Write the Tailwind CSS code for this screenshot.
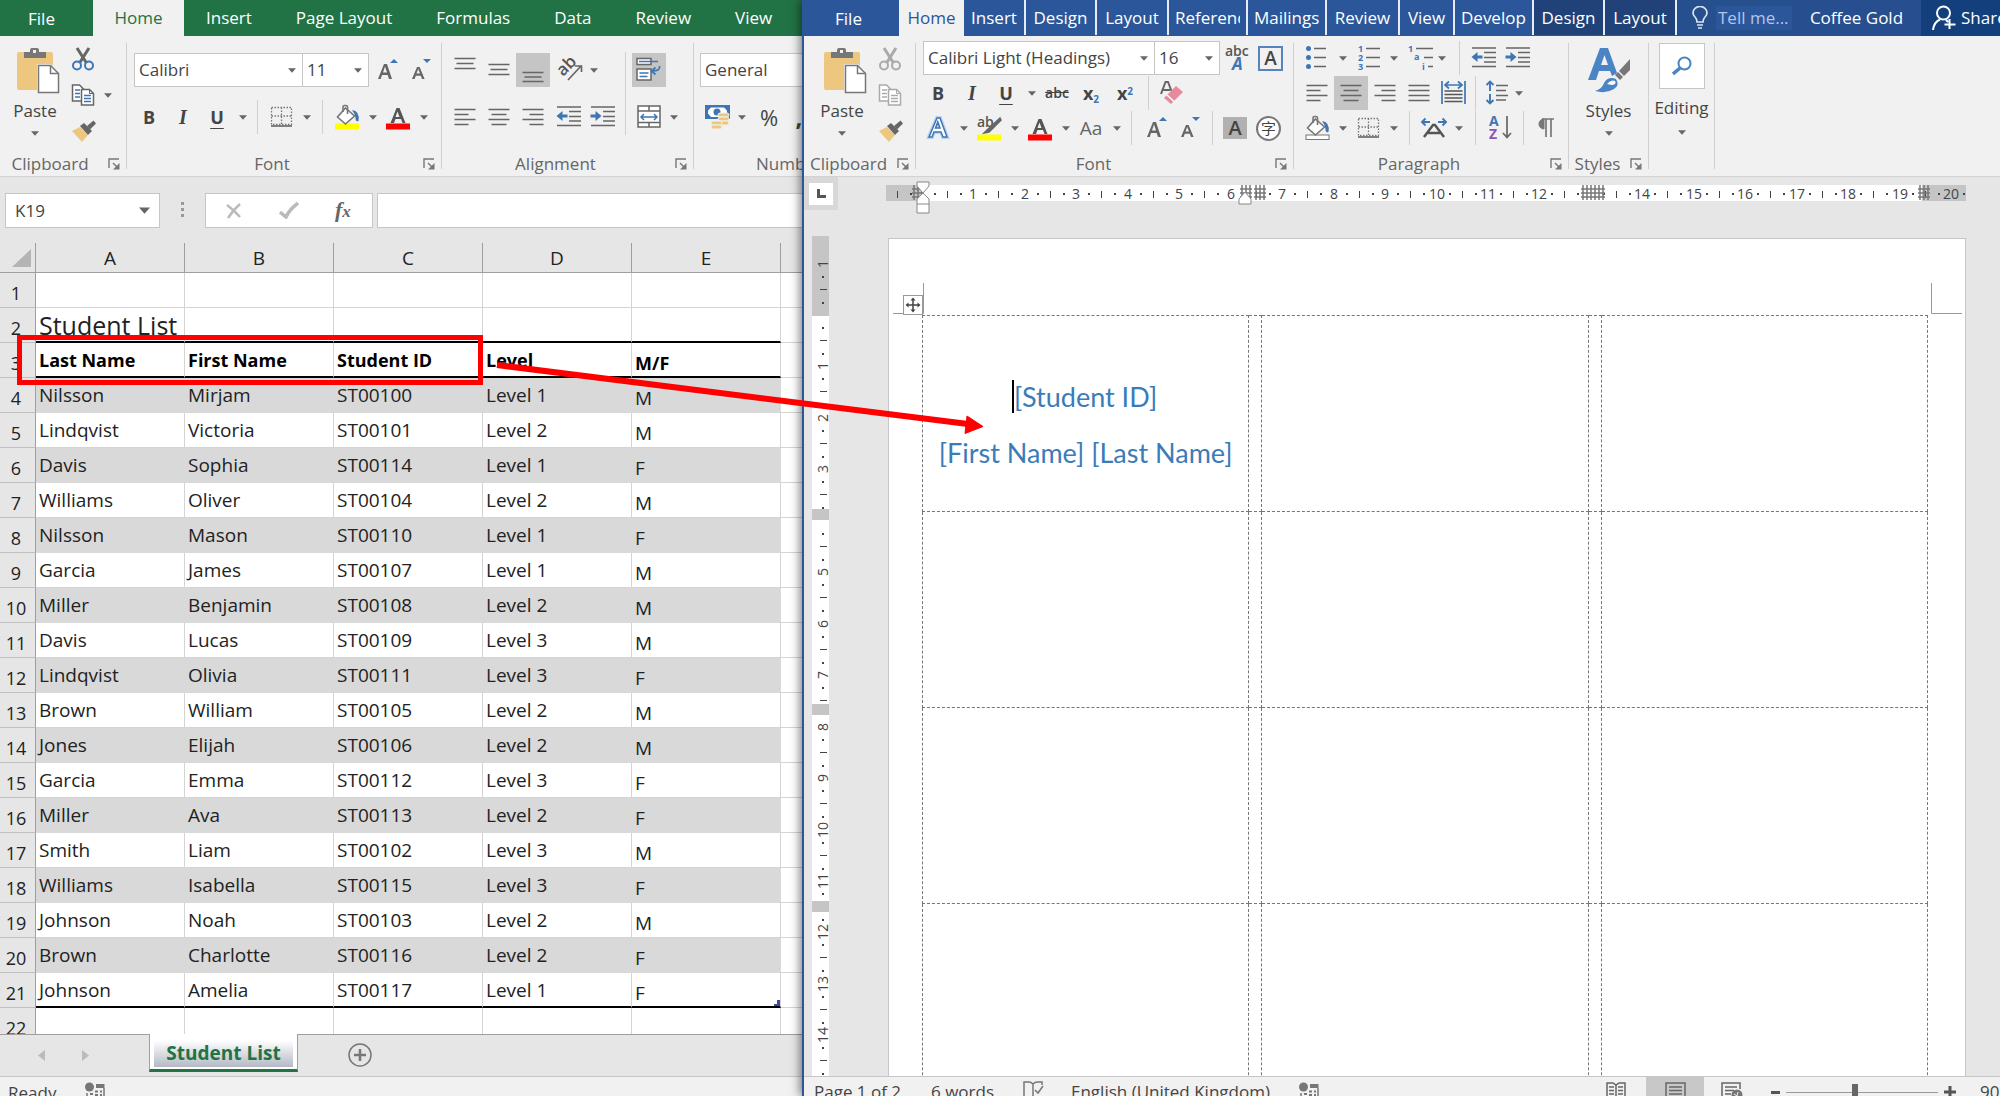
<!DOCTYPE html>
<html lang="en">
<head>
    <meta charset="UTF-8">
    <meta name="viewport" content="width=device-width, initial-scale=1.0">
    <title>Student List - Labels</title>
    <script src="https://cdn.jsdelivr.net/npm/@tailwindcss/browser@4"></script>
</head>
<body class="relative h-screen overflow-hidden bg-[#e6e6e6] font-['Open_Sans',sans-serif] text-[17px] leading-6 text-[#444]">

    <!-- Icon set -->
    <svg class="hidden">
        <symbol id="caret" viewBox="0 0 8 5"><path d="M0 0.3h8L4 4.8z" fill="#666"/></symbol>
        <symbol id="launcher" viewBox="0 0 12 12"><path d="M1 10V1h10" fill="none" stroke="#777" stroke-width="1.4"/><path d="M5 5l4 4" stroke="#777" stroke-width="1.4"/><path d="M11.5 5v6.500h-6.500z" fill="#777"/></symbol>
        <symbol id="paste" viewBox="0 0 44 48">
            <rect x="1" y="5" width="36" height="38" rx="2" fill="#edc77f"/>
            <path d="M8 11V5h6V3q0-2 2-2h5q2 0 2 2v2h7v6z" fill="#777"/><rect x="17" y="3" width="3" height="3" fill="#f1f1f1"/>
            <path d="M21 17h14l9 9v21H21z" fill="#f1f1f1"/>
            <path d="M22.500 18.500h12l8 8v19h-20z" fill="#fff" stroke="#777" stroke-width="1.5"/><path d="M34.500 18.500v8h8" fill="none" stroke="#777" stroke-width="1.5"/>
        </symbol>
        <symbol id="cut" viewBox="0 0 24 24"><path d="M6 1l9.500 15M18 1L8.500 16" fill="none" stroke="currentColor" stroke-width="3"/><g fill="none" stroke="var(--ring)" stroke-width="2"><circle cx="6" cy="18.500" r="4"/><circle cx="18" cy="18.500" r="4"/></g></symbol>
        <symbol id="copy" viewBox="0 0 24 24">
            <path d="M1.500 2h7l4 4v12h-11z" fill="#fff" stroke="currentColor" stroke-width="1.500"/><path d="M4 7h5M4 10.500h5M4 14h5" stroke="var(--ring)" stroke-width="1.500"/>
            <path d="M10.500 6.500h8l4 4v11.500h-12z" fill="#fff" stroke="currentColor" stroke-width="1.500"/><path d="M18.500 6.500v4h4" fill="none" stroke="currentColor"/><path d="M13 12.500h7M13 15.500h7M13 18.500h7" stroke="var(--ring)" stroke-width="1.500"/>
        </symbol>
        <symbol id="brush" viewBox="0 0 26 24"><path d="M1 12l8-4 8 8-6 7z" fill="#edc77f"/><path d="M9 7l4-3 8 8-4 4z" fill="#666"/><path d="M16 7l6.500-5.500 2.500 3-6 6z" fill="#666"/></symbol>
        <symbol id="borders" viewBox="0 0 34 34"><path d="M7.500 7.500h20v17h-20zM17.500 7.500v17M7.500 16h20" fill="none" stroke="#777" stroke-width="1.300" stroke-dasharray="1.500 1.500"/><path d="M7 26h21" stroke="#666" stroke-width="1.600"/></symbol>
        <symbol id="bucket" viewBox="0 0 34 34"><path d="M15.500 8l9 8-9 8-8-7z" fill="#fff" stroke="#777" stroke-width="1.600"/><path d="M13 12V7q0-1.500 1.500-1.500h1.500q1.500 0 1.500 1.500v7" fill="none" stroke="#777" stroke-width="1.600"/><path d="M22 10q8 1 6.500 11-3 1-3-3l-1-4z" fill="#3e76b5"/></symbol>
        <symbol id="fontcolor" viewBox="0 0 34 34"><path d="M9.500 23l6-15h3l6 15h-3l-1.500-4h-5.500l-1.500 4zM14.500 17h4l-2-5.500z" fill="#555"/><rect x="5" y="23.500" width="24" height="6" fill="#f00"/></symbol>
        <symbol id="grow" viewBox="0 0 34 34"><path d="M7 26l6-15h3l5 15h-3l-1.300-4h-5.700l-1.300 4zM12 19.500h4l-2-6z" fill="#666"/><path d="M19 10l4-4 4 4z" fill="#3e76b5"/></symbol>
        <symbol id="shrink" viewBox="0 0 34 34"><path d="M7 26l5-12h2.600l5 12h-2.600l-1.200-3.300h-5l-1.200 3.300zM11.500 20.500h3.500l-1.800-4.500z" fill="#666"/><path d="M18 6h8l-4 4z" fill="#3e76b5"/></symbol>
        <symbol id="al-top" viewBox="0 0 34 34"><path d="M6.500 5.500h21M8.500 10.500h17M6.500 15.500h21" stroke="#666" stroke-width="1.500"/></symbol>
        <symbol id="al-mid" viewBox="0 0 34 34"><path d="M6.500 11.500h21M8.500 16.500h17M6.500 21.500h21" stroke="#666" stroke-width="1.500"/></symbol>
        <symbol id="al-bot" viewBox="0 0 34 34"><path d="M6.500 19.500h21M8.500 24h17M6.500 28.500h21" stroke="#666" stroke-width="1.500"/></symbol>
        <symbol id="al-left" viewBox="0 0 34 34"><path d="M6.500 9.500h21M6.500 14.500h14M6.500 19.500h21M6.500 24.500h14" stroke="#666" stroke-width="1.500"/></symbol>
        <symbol id="al-center" viewBox="0 0 34 34"><path d="M6.500 9.500h21M9.500 14.500h15M6.500 19.500h21M9.500 24.500h15" stroke="#666" stroke-width="1.500"/></symbol>
        <symbol id="al-right" viewBox="0 0 34 34"><path d="M6.500 9.500h21M13.500 14.500h14M6.500 19.500h21M13.500 24.500h14" stroke="#666" stroke-width="1.500"/></symbol>
        <symbol id="al-just" viewBox="0 0 34 34"><path d="M6.500 9.500h21M6.500 14.500h21M6.500 19.500h21M6.500 24.500h21" stroke="#666" stroke-width="1.500"/></symbol>
        <symbol id="outdent" viewBox="0 0 34 34"><path d="M5 7h24M17 11.500h12M17 16.500h12M17 21h12M5 25.500h24" stroke="#666" stroke-width="1.500"/><path d="M4.500 16l6-5v3.500h5v3h-5v3.500z" fill="#3e76b5"/></symbol>
        <symbol id="indent" viewBox="0 0 34 34"><path d="M5 7h24M17 11.500h12M17 16.500h12M17 21h12M5 25.500h24" stroke="#666" stroke-width="1.500"/><path d="M15.500 16l-6-5v3.500h-5v3h5v3.500z" fill="#3e76b5"/></symbol>
        <symbol id="wrap" viewBox="0 0 34 34"><g fill="#fff" stroke="#666" stroke-width="1.500"><rect x="5" y="5.500" width="14" height="6"/><rect x="5" y="16" width="14" height="11"/></g><path d="M7 8.500h19M7.500 20h9M7.500 23.500h8M27.500 13q1 5-7 5M23.500 14.500l-4 3.500 4 3.500" fill="none" stroke="#3e76b5" stroke-width="1.700"/></symbol>
        <symbol id="merge" viewBox="0 0 34 34"><path d="M6 6h22v21H6zM6 11h22M6 22.500h22M17 6v5M17 22.500V27" fill="#fff" stroke="#666" stroke-width="1.500"/><path d="M9 17h16M12 14l-3 3 3 3M22 14l3 3-3 3" fill="none" stroke="#3e76b5" stroke-width="1.500"/></symbol>
        <symbol id="money" viewBox="0 0 34 34"><path d="M5 5h25v14H5z" fill="#3e76b5"/><path d="M11 7.500h13l3 3v3l-3 3.500H11l-3-3.500v-3z" fill="#fff"/><circle cx="17" cy="12" r="3.500" fill="#3e76b5"/><g fill="#edc77f" stroke="#f1f1f1"><rect x="18" y="13" width="11" height="4" rx="2"/><rect x="18" y="17" width="11" height="4" rx="2"/><rect x="18" y="21" width="11" height="4" rx="2"/><rect x="11" y="21" width="11" height="4" rx="2"/><rect x="11" y="25" width="11" height="4" rx="2"/></g></symbol>
        <symbol id="eraser" viewBox="0 0 34 34"><path d="M6 18L10.500 6h2.500l3.500 9M8 14h7" fill="none" stroke="#666" stroke-width="2"/><path d="M9 22L21 10l7 6-12 12z" fill="#e88a9e"/><path d="M12 19l7 6.500" stroke="#fff" stroke-width="1.500"/></symbol>
        <symbol id="bullets" viewBox="0 0 34 34"><g fill="#3e76b5"><circle cx="8.500" cy="7.500" r="2.500"/><circle cx="8.500" cy="16.500" r="2.500"/><circle cx="8.500" cy="25.500" r="2.500"/></g><path d="M14 7.500h12M14 16.500h12M14 25.500h12" stroke="#666" stroke-width="1.500"/></symbol>
        <symbol id="distribute" viewBox="0 0 34 34"><path d="M6 5v23M29 5v23M9.500 9h16M13 5.500L9 9l4 3.500M22 5.500L26 9l-4 3.500" fill="none" stroke="#3e76b5" stroke-width="1.700"/><path d="M8.500 15h18M8.500 18.500h18M8.500 22h18M8.500 25.500h18" stroke="#555" stroke-width="1.500"/></symbol>
        <symbol id="spacing" viewBox="0 0 34 34"><path d="M9 6v9M5.500 9L9 5.500l3.500 3.500M9 18v9M5.500 24L9 27.500l3.500-3.500" fill="none" stroke="#3e76b5" stroke-width="1.900"/><path d="M15 9.500h12M15 14.500h10M15 19.500h12M15 24h10" stroke="#666" stroke-width="1.500"/></symbol>
        <symbol id="move" viewBox="0 0 20 20"><rect x="0.500" y="0.500" width="19" height="19" fill="#fff" stroke="#999"/><path d="M10 4v12M4 10h12" stroke="#444" stroke-width="1.500"/><path d="M10 2.500l2.500 3h-5zM10 17.500l2.500-3h-5zM2.500 10l3-2.500v5zM17.500 10l-3-2.500v5z" fill="#444"/></symbol>
        <symbol id="macro" viewBox="0 0 20 20"><circle cx="4.500" cy="5" r="4.500" fill="#777"/><path d="M11 2h8.500v4H11z" fill="#777"/><path d="M2 11v8h17V6" fill="none" stroke="#777" stroke-width="1.500"/><path d="M5 12h3M10 9.500h3M15 9.500h2M10 13h3M15 13h2M5 16h3M10 16h3M15 16h2" stroke="#777" stroke-width="1.800"/></symbol>
    </svg>

    <main class="grid h-full grid-cols-[802fr_1198fr]">

        <!-- Spreadsheet window -->
        <section class="flex min-w-0 flex-col overflow-hidden">
            <nav class="flex h-9 shrink-0 items-center bg-[#217346] whitespace-nowrap text-white">
                <button class="h-9 w-[93px] pr-[10px] pt-[2px]">File</button>
                <button class="h-9 w-[91px] bg-[#f1f1f1] text-[#217346]">Home</button>
                <div class="flex gap-11 pl-[22px]">
                    <button>Insert</button><button>Page Layout</button><button>Formulas</button><button>Data</button><button>Review</button><button>View</button>
                </div>
            </nav>

            <div class="flex h-[141px] shrink-0 border-b border-[#d2d2d2] bg-[#f1f1f1]">
                <div class="flex w-[126px] shrink-0 flex-col">
                    <div class="flex flex-1 pt-[11px]">
                        <button class="ml-2 flex w-[54px] flex-col items-center"><svg class="h-12 w-11 shrink-0 translate-x-[3px]"><use href="#paste"/></svg><span class="mt-1">Paste</span><svg class="mt-2 h-[5px] w-2"><use href="#caret"/></svg></button>
                        <div class="ml-[9px] flex flex-col gap-3 text-[#666] [--ring:#3e76b5]">
                            <button aria-label="Cut"><svg class="h-6 w-6"><use href="#cut"/></svg></button>
                            <button aria-label="Copy" class="flex items-center gap-[9px]"><svg class="h-6 w-6"><use href="#copy"/></svg><svg class="h-[5px] w-2"><use href="#caret"/></svg></button>
                            <button aria-label="Format Painter"><svg class="h-6 w-[26px]"><use href="#brush"/></svg></button>
                        </div>
                    </div>
                    <div class="flex h-6 items-center text-[#666]"><span class="flex-1 pr-2 text-center">Clipboard</span><button aria-label="Clipboard settings" class="mr-[6px]"><svg class="h-3 w-3"><use href="#launcher"/></svg></button></div>
                </div>
                <div class="my-[7px] w-px shrink-0 bg-[#d0d0d0]"></div>

                <div class="flex w-[314px] shrink-0 flex-col">
                    <div class="flex flex-1 flex-col gap-[13px] pt-[17px] pl-[5px]">
                        <div class="flex h-[34px]">
                            <label class="relative ml-[2px]"><select aria-label="Font" class="h-[34px] w-[169px] appearance-none border border-[#c6c6c6] bg-white pl-1"><option>Calibri</option></select><svg class="absolute top-[15px] right-[7px] h-[5px] w-2"><use href="#caret"/></svg></label>
                            <label class="relative"><select aria-label="Font size" class="h-[34px] w-[66px] appearance-none border border-l-0 border-[#c6c6c6] bg-white pl-1"><option>11</option></select><svg class="absolute top-[15px] right-[7px] h-[5px] w-2"><use href="#caret"/></svg></label>
                            <button aria-label="Increase font size" class="ml-[2px]"><svg class="size-[34px]"><use href="#grow"/></svg></button>
                            <button aria-label="Decrease font size"><svg class="size-[34px]"><use href="#shrink"/></svg></button>
                        </div>
                        <div class="flex h-[34px] items-center text-[18px] font-bold">
                            <button class="w-[34px]">B</button>
                            <button class="w-[34px] font-['Liberation_Serif',serif] text-[20px] italic">I</button>
                            <button class="w-[34px] underline underline-offset-4">U</button>
                            <button aria-label="Underline style" class="flex w-[17px] justify-center"><svg class="h-[5px] w-2"><use href="#caret"/></svg></button>
                            <div class="mx-[6px] h-[34px] w-px bg-[#d0d0d0]"></div>
                            <button aria-label="Borders"><svg class="size-[34px]"><use href="#borders"/></svg></button>
                            <button aria-label="Border style" class="flex w-[17px] justify-center"><svg class="h-[5px] w-2"><use href="#caret"/></svg></button>
                            <div class="mx-[7px] h-[34px] w-px bg-[#d0d0d0]"></div>
                            <button aria-label="Fill colour"><svg class="size-[34px]" viewBox="0 0 34 34"><rect x="5" y="23.500" width="24" height="6" fill="#ff0"/><use href="#bucket" width="34" height="34"/></svg></button>
                            <button aria-label="Fill colours" class="flex w-[17px] justify-center"><svg class="h-[5px] w-2"><use href="#caret"/></svg></button>
                            <button aria-label="Font colour"><svg class="size-[34px]"><use href="#fontcolor"/></svg></button>
                            <button aria-label="Font colours" class="flex w-[17px] justify-center"><svg class="h-[5px] w-2"><use href="#caret"/></svg></button>
                        </div>
                    </div>
                    <div class="flex h-6 items-center text-[#666]"><span class="flex-1 pr-[6px] text-center">Font</span><button aria-label="Font settings" class="mr-[6px]"><svg class="h-3 w-3"><use href="#launcher"/></svg></button></div>
                </div>
                <div class="my-[7px] w-px shrink-0 bg-[#d0d0d0]"></div>

                <div class="flex w-[251px] shrink-0 flex-col">
                    <div class="flex flex-1 pl-[6px]">
                        <div class="flex flex-col gap-[13px] pt-[17px]">
                            <div class="flex h-[34px] items-center">
                                <button aria-label="Top align"><svg class="size-[34px]"><use href="#al-top"/></svg></button>
                                <button aria-label="Middle align"><svg class="size-[34px]"><use href="#al-mid"/></svg></button>
                                <button aria-label="Bottom align" class="bg-[#c5c5c5]"><svg class="size-[34px]"><use href="#al-bot"/></svg></button>
                                <button aria-label="Orientation" class="ml-1"><svg class="size-[34px]" viewBox="0 0 34 34"><text x="9" y="24" transform="rotate(-45 9 24)" font-size="17" font-weight="600" fill="#555">ab</text><path d="M14 27l13-14M21 13h6.500v6" fill="none" stroke="#666" stroke-width="1.700"/></svg></button>
                                <svg class="ml-[2px] h-[5px] w-2"><use href="#caret"/></svg>
                            </div>
                            <div class="flex h-[34px] items-center">
                                <button aria-label="Align left"><svg class="size-[34px]"><use href="#al-left"/></svg></button>
                                <button aria-label="Centre"><svg class="size-[34px]"><use href="#al-center"/></svg></button>
                                <button aria-label="Align right"><svg class="size-[34px]"><use href="#al-right"/></svg></button>
                                <button aria-label="Decrease indent" class="ml-[2px]"><svg class="size-[34px]"><use href="#outdent"/></svg></button>
                                <button aria-label="Increase indent"><svg class="size-[34px]"><use href="#indent"/></svg></button>
                            </div>
                        </div>
                        <div class="mr-[6px] ml-[5px] mt-4 h-[83px] w-px bg-[#d0d0d0]"></div>
                        <div class="flex flex-col gap-[13px] pt-[17px]">
                            <button aria-label="Wrap text" class="w-[34px] bg-[#c5c5c5]"><svg class="size-[34px]"><use href="#wrap"/></svg></button>
                            <button aria-label="Merge and centre" class="flex items-center gap-1"><svg class="size-[34px]"><use href="#merge"/></svg><svg class="h-[5px] w-2"><use href="#caret"/></svg></button>
                        </div>
                    </div>
                    <div class="flex h-6 items-center text-[#666]"><span class="flex-1 pr-[6px] text-center">Alignment</span><button aria-label="Alignment settings" class="mr-[6px]"><svg class="h-3 w-3"><use href="#launcher"/></svg></button></div>
                </div>
                <div class="my-[7px] w-px shrink-0 bg-[#d0d0d0]"></div>

                <div class="flex w-[200px] shrink-0 flex-col">
                    <div class="flex flex-1 flex-col gap-[13px] pt-[17px] pl-[6px]">
                        <select aria-label="Number format" class="h-[34px] w-[180px] appearance-none border border-[#c6c6c6] bg-white pl-1"><option>General</option></select>
                        <div class="flex h-[34px] items-center">
                            <button aria-label="Accounting format"><svg class="size-[34px]"><use href="#money"/></svg></button>
                            <svg class="ml-1 h-[5px] w-2"><use href="#caret"/></svg>
                            <button class="ml-[6px] w-[34px] text-[22px]">%</button>
                            <button class="w-[26px] text-[24px] font-bold">,</button>
                        </div>
                    </div>
                    <div class="h-6 pl-[62px] text-[#666]">Number</div>
                </div>
            </div>

            <!-- Formula bar -->
            <div class="flex h-[66px] shrink-0 items-start pt-4 pl-[5px]">
                <label class="relative"><input aria-label="Name box" value="K19" class="h-[35px] w-[155px] border border-[#c6c6c6] bg-white pl-[9px]"><svg class="absolute top-[14px] right-[10px] h-[7px] w-[11px]"><use href="#caret"/></svg></label>
                <svg class="mx-[18px] h-[35px] w-[9px]" fill="#999"><rect x="3" y="9" width="3" height="3"/><rect x="3" y="15" width="3" height="3"/><rect x="3" y="21" width="3" height="3"/></svg>
                <div class="flex h-[35px] w-[168px] items-center border border-[#c6c6c6] bg-white">
                    <button aria-label="Cancel" class="ml-5"><svg class="h-4 w-4" viewBox="0 0 16 16"><path d="M1 2q7 5 13 12M14 1Q7 7 2 15" fill="none" stroke="#bbb" stroke-width="2.500"/></svg></button>
                    <button aria-label="Enter" class="ml-[37px]"><svg class="h-[17px] w-5" viewBox="0 0 20 17"><path d="M1 10l6 5Q10 8 19 1" fill="none" stroke="#bbb" stroke-width="3.500"/></svg></button>
                    <button aria-label="Insert function" class="ml-9 font-['Liberation_Serif',serif] text-[22px] font-bold italic text-[#666]">f<span class="text-[17px]">x</span></button>
                </div>
                <input aria-label="Formula" class="ml-1 h-[35px] min-w-0 flex-1 border border-r-0 border-[#c6c6c6] bg-white">
            </div>

            <!-- Sheet -->
            <div class="min-h-0 flex-1 overflow-hidden bg-white text-[19px] leading-6 text-[#222]">
                <table class="w-full table-fixed border-separate border-spacing-0 text-left">
                    <colgroup><col class="w-[36px]"><col class="w-[149px]"><col class="w-[149px]"><col class="w-[149px]"><col class="w-[149px]"><col class="w-[149px]"><col></colgroup>
                    <thead>
                        <tr class="h-[30px] bg-[#e6e6e6] text-center">
                            <th class="border-r border-b border-[#9f9f9f] p-0"><svg class="ml-3 h-[18px] w-[19px]" viewBox="0 0 19 18"><path d="M19 0v18H0z" fill="#b4b4b4"/></svg></th>
                            <th class="border-r border-b border-[#9f9f9f] p-0 font-normal">A</th><th class="border-r border-b border-[#9f9f9f] p-0 font-normal">B</th><th class="border-r border-b border-[#9f9f9f] p-0 font-normal">C</th><th class="border-r border-b border-[#9f9f9f] p-0 font-normal">D</th><th class="border-r border-b border-[#9f9f9f] p-0 font-normal">E</th><th class="border-b border-[#9f9f9f] p-0"></th>
                        </tr>
                    </thead>
                    <tbody id="sheet"></tbody>
                </table>
            </div>

            <!-- Sheet tabs -->
            <div class="flex h-[42px] shrink-0 border-t border-[#9f9f9f] bg-[#e6e6e6]">
                <button aria-label="Previous sheet" class="ml-[38px] h-10"><svg class="h-[11px] w-[7px]"><path d="M7 0v11L0 5.500z" fill="#bbb"/></svg></button>
                <button aria-label="Next sheet" class="ml-[37px] h-10"><svg class="h-[11px] w-[7px]"><path d="M0 0v11l7-5.500z" fill="#bbb"/></svg></button>
                <button class="-mt-px ml-[60px] h-[38px] w-[149px] border-x border-b-[3px] border-x-[#9f9f9f] border-b-[#217346] bg-white px-1 pb-[2px] text-[19px] font-bold text-[#217346]"><span class="flex h-[33px] items-center justify-center bg-linear-to-b from-white from-20% to-[#b4b9c4] pt-[5px]">Student List</span></button>
                <button aria-label="New sheet" class="ml-[50px] h-10"><svg class="size-6" viewBox="0 0 24 24" fill="none" stroke="#777"><circle cx="12" cy="12" r="11" stroke-width="1.500"/><path d="M12 6v12M6 12h12" stroke-width="2.500"/></svg></button>
            </div>
            <footer class="flex h-5 shrink-0 items-start overflow-hidden border-t border-[#c6c6c6] bg-[#f1f1f1] pl-2">
                <span class="mt-1 w-[77px]">Ready</span><svg class="mt-[5px] size-5 shrink-0"><use href="#macro"/></svg>
            </footer>
        </section>

        <!-- Document window -->
        <section class="relative z-10 flex min-w-0 flex-col overflow-hidden border-l-2 border-[#2b579a] bg-[#e6e6e6] shadow-[-2px_0_9px_rgba(0,0,0,0.5)]">
            <nav class="flex h-9 shrink-0 bg-[#2b579a] whitespace-nowrap text-white">
                <button class="w-[95px] shrink-0 pr-[6px] pt-[2px]">File</button>
                <button class="w-[65px] shrink-0 bg-[#f1f1f1] text-[#2b579a]">Home</button>
                <button class="mb-px w-[62px] shrink-0 border-r-2 border-[#e6ecf5]">Insert</button>
                <button class="mb-px w-[71px] shrink-0 border-r-2 border-[#e6ecf5]">Design</button>
                <button class="mb-px w-[72px] shrink-0 border-r-2 border-[#e6ecf5]">Layout</button>
                <button class="mb-px w-[79px] shrink-0 overflow-hidden border-r-2 border-[#e6ecf5] px-[6px] text-left"><span class="block overflow-hidden">References</span></button>
                <button class="mb-px w-[79px] shrink-0 overflow-hidden border-r-2 border-[#e6ecf5] px-[6px] text-left"><span class="block overflow-hidden">Mailings</span></button>
                <button class="mb-px w-[73px] shrink-0 border-r-2 border-[#e6ecf5]">Review</button>
                <button class="mb-px w-[55px] shrink-0 border-r-2 border-[#e6ecf5]">View</button>
                <button class="mb-px w-[79px] shrink-0 overflow-hidden border-r-2 border-[#e6ecf5] px-[6px] text-left"><span class="block overflow-hidden">Develop</span></button>
                <button class="mb-px w-[71px] shrink-0 border-r-2 border-[#e6ecf5] bg-[#204279]">Design</button>
                <button class="mb-px w-[72px] shrink-0 border-r-2 border-[#e6ecf5] bg-[#204279]">Layout</button>
                <label class="flex shrink-0 items-center bg-[#264f8e] pl-[15px]">
                    <svg class="mr-2 h-6 w-4" viewBox="0 0 16 24" fill="none" stroke="#dbe4f3" stroke-width="1.700"><path d="M5 16q0-3-2-5Q1 9 1 7a7 6.500 0 0 1 14 0q0 2-2 4t-2 5zM5 19h6M6 22h4"/></svg>
                    <input aria-label="Tell me" placeholder="Tell me..." class="h-6 w-[76px] bg-[#2b579a] pl-[2px] placeholder:text-[#b4c6ea]">
                </label>
                <button class="min-w-0 flex-1 bg-[#274f8f]">Coffee Gold</button>
                <button class="flex w-[79px] shrink-0 items-center overflow-hidden bg-[#13407c] pl-[11px]">
                    <svg class="mr-[5px] h-[26px] w-6 shrink-0" viewBox="0 0 24 26" fill="none" stroke="#fff" stroke-width="2"><circle cx="11.500" cy="8" r="6.500"/><path d="M1 25q1-8 7-10.500M14 15l2 2M17.500 14v10M12.500 19.500h11"/></svg>Share
                </button>
            </nav>

            <div class="flex h-[141px] shrink-0 border-b border-[#d2d2d2] bg-[#f1f1f1]">
                <div class="flex w-[111px] shrink-0 flex-col">
                    <div class="flex flex-1 pt-[11px]">
                        <button class="ml-[11px] flex w-[54px] flex-col items-center"><svg class="h-12 w-11 shrink-0 translate-x-[3px]"><use href="#paste"/></svg><span class="mt-1">Paste</span><svg class="mt-2 h-[5px] w-2"><use href="#caret"/></svg></button>
                        <div class="ml-[9px] flex flex-col gap-3 text-[#aaa] [--ring:#aaa]">
                            <button aria-label="Cut"><svg class="h-6 w-6"><use href="#cut"/></svg></button>
                            <button aria-label="Copy"><svg class="h-6 w-6"><use href="#copy"/></svg></button>
                            <button aria-label="Format Painter"><svg class="h-6 w-[26px]"><use href="#brush"/></svg></button>
                        </div>
                    </div>
                    <div class="flex h-6 items-center text-[#666]"><span class="flex-1 pl-1 text-center">Clipboard</span><button aria-label="Clipboard settings" class="mr-[6px] ml-2"><svg class="h-3 w-3"><use href="#launcher"/></svg></button></div>
                </div>
                <div class="my-[7px] w-px shrink-0 bg-[#d0d0d0]"></div>

                <div class="flex w-[377px] shrink-0 flex-col">
                    <div class="flex flex-1 flex-col gap-px pt-[5px] pl-[5px]">
                        <div class="flex h-[34px] items-center">
                            <label class="relative ml-[2px]"><select aria-label="Font" class="h-[34px] w-[232px] appearance-none border border-[#c6c6c6] bg-white pl-1"><option>Calibri Light (Headings)</option></select><svg class="absolute top-[15px] right-[7px] h-[5px] w-2"><use href="#caret"/></svg></label>
                            <label class="relative"><select aria-label="Font size" class="h-[34px] w-[65px] appearance-none border border-l-0 border-[#c6c6c6] bg-white pl-1"><option>16</option></select><svg class="absolute top-[15px] right-[7px] h-[5px] w-2"><use href="#caret"/></svg></label>
                            <button aria-label="Phonetic guide"><svg class="size-[34px]" viewBox="0 0 34 34"><text x="5" y="15" font-size="14" font-weight="600" fill="#555">abc</text><text x="12" y="29" font-size="17" font-weight="700" font-style="italic" fill="#3e76b5">A</text></svg></button>
                            <button class="ml-1 flex h-[25px] w-[25px] items-center justify-center border-2 border-[#5585bd] text-[19px] font-semibold">A</button>
                        </div>
                        <div class="flex h-[34px] items-center text-[18px] font-bold">
                            <button class="w-[34px]">B</button>
                            <button class="w-[34px] font-['Liberation_Serif',serif] text-[20px] italic">I</button>
                            <button class="w-[34px] underline underline-offset-4">U</button>
                            <button aria-label="Underline style" class="flex w-[17px] justify-center"><svg class="h-[5px] w-2"><use href="#caret"/></svg></button>
                            <button class="w-[34px] text-[14px] font-semibold line-through">abc</button>
                            <button class="w-[34px]">x<sub class="text-[10px] text-[#3e76b5]">2</sub></button>
                            <button class="w-[34px]">x<sup class="text-[10px] text-[#3e76b5]">2</sup></button>
                            <div class="mx-[6px] h-[34px] w-px bg-[#d0d0d0]"></div>
                            <button aria-label="Clear formatting"><svg class="size-[34px]"><use href="#eraser"/></svg></button>
                        </div>
                        <div class="flex h-[34px] items-center">
                            <button aria-label="Text effects"><svg class="size-[34px]" viewBox="0 0 34 34"><path d="M8 26l8-19h3l7 19h-4l-2-5h-7l-2 5zM14.500 17h4.500l-2.200-6z" fill="#fff" stroke="#b9d2ee" stroke-width="4"/><path d="M8 26l8-19h3l7 19h-4l-2-5h-7l-2 5zM14.500 17h4.500l-2.200-6z" fill="#fff" stroke="#3e76b5" stroke-width="1.500"/></svg></button>
                            <button aria-label="Text effect styles" class="flex w-[17px] justify-center"><svg class="h-[5px] w-2"><use href="#caret"/></svg></button>
                            <button aria-label="Highlight"><svg class="size-[34px]" viewBox="0 0 34 34"><text x="5" y="16" font-size="14" font-weight="600" fill="#555">ab</text><path d="M28 7l-13 12-3 3 5-1L29 9z" fill="#666" stroke="#666" stroke-width="1.500"/><rect x="5" y="23.500" width="24" height="6" fill="#ff0"/></svg></button>
                            <button aria-label="Highlight colours" class="flex w-[17px] justify-center"><svg class="h-[5px] w-2"><use href="#caret"/></svg></button>
                            <button aria-label="Font colour"><svg class="size-[34px]"><use href="#fontcolor"/></svg></button>
                            <button aria-label="Font colours" class="flex w-[17px] justify-center"><svg class="h-[5px] w-2"><use href="#caret"/></svg></button>
                            <button class="w-[34px] text-[19px] text-[#666]">Aa</button>
                            <button aria-label="Case options" class="flex w-[17px] justify-center"><svg class="h-[5px] w-2"><use href="#caret"/></svg></button>
                            <div class="mr-[8px] ml-[6px] h-[34px] w-px bg-[#d0d0d0]"></div>
                            <button aria-label="Increase font size"><svg class="size-[34px]"><use href="#grow"/></svg></button>
                            <button aria-label="Decrease font size"><svg class="size-[34px]"><use href="#shrink"/></svg></button>
                            <div class="mr-[6px] ml-1 h-[34px] w-px bg-[#d0d0d0]"></div>
                            <button class="ml-1 flex h-[22px] w-[24px] items-center justify-center bg-[#b1b1b1] text-[20px] font-semibold">A</button>
                            <button class="ml-[9px] flex size-[25px] items-center justify-center rounded-full border-2 border-[#777] bg-white font-['Noto_Sans_CJK_SC',sans-serif] text-[15px]">字</button>
                        </div>
                    </div>
                    <div class="flex h-6 items-center text-[#666]"><span class="flex-1 pr-1 text-center">Font</span><button aria-label="Font settings" class="mr-[6px]"><svg class="h-3 w-3"><use href="#launcher"/></svg></button></div>
                </div>
                <div class="my-[7px] w-px shrink-0 bg-[#d0d0d0]"></div>

                <div class="flex w-[274px] shrink-0 flex-col">
                    <div class="flex flex-1 flex-col gap-px pt-[5px] pl-[6px]">
                        <div class="flex h-[34px] items-center">
                            <button aria-label="Bullets"><svg class="size-[34px]"><use href="#bullets"/></svg></button>
                            <button aria-label="Bullet library" class="flex w-[17px] justify-center"><svg class="h-[5px] w-2"><use href="#caret"/></svg></button>
                            <button aria-label="Numbering"><svg class="size-[34px]" viewBox="0 0 34 34"><g font-size="9" font-weight="700" fill="#3e76b5"><text x="7" y="11">1</text><text x="7" y="20">2</text><text x="7" y="29">3</text></g><path d="M15 7.500h14M15 16.500h14M15 25.500h14" stroke="#666" stroke-width="1.500"/></svg></button>
                            <button aria-label="Numbering library" class="flex w-[17px] justify-center"><svg class="h-[5px] w-2"><use href="#caret"/></svg></button>
                            <button aria-label="Multilevel list"><svg class="size-[34px]" viewBox="0 0 34 34"><g font-size="9" font-weight="700" fill="#3e76b5"><text x="6" y="11">1</text><text x="12" y="19">a</text><text x="20" y="29">i</text></g><path d="M14 7.500h17M22 16.500h9M26 25.500h5" stroke="#666" stroke-width="1.500"/></svg></button>
                            <svg class="mr-[13px] ml-[2px] h-[5px] w-2"><use href="#caret"/></svg>
                            <div class="mr-[7px] h-[34px] w-px bg-[#d0d0d0]"></div>
                            <button aria-label="Decrease indent"><svg class="size-[34px]"><use href="#outdent"/></svg></button>
                            <button aria-label="Increase indent"><svg class="size-[34px]"><use href="#indent"/></svg></button>
                        </div>
                        <div class="flex h-[34px] items-center">
                            <button aria-label="Align left"><svg class="size-[34px]"><use href="#al-left"/></svg></button>
                            <button aria-label="Centre" class="bg-[#c5c5c5]"><svg class="size-[34px]"><use href="#al-center"/></svg></button>
                            <button aria-label="Align right"><svg class="size-[34px]"><use href="#al-right"/></svg></button>
                            <button aria-label="Justify"><svg class="size-[34px]"><use href="#al-just"/></svg></button>
                            <button aria-label="Distribute"><svg class="size-[34px]"><use href="#distribute"/></svg></button>
                            <div class="mx-[5px] h-[34px] w-px bg-[#d0d0d0]"></div>
                            <button aria-label="Line spacing"><svg class="size-[34px]"><use href="#spacing"/></svg></button>
                            <svg class="h-[5px] w-2"><use href="#caret"/></svg>
                        </div>
                        <div class="flex h-[34px] items-center">
                            <button aria-label="Shading"><svg class="size-[34px]" viewBox="0 0 34 34"><rect x="6" y="24" width="23" height="4.500" fill="#fff" stroke="#777"/><use href="#bucket" width="34" height="34"/></svg></button>
                            <button aria-label="Shading colours" class="flex w-[17px] justify-center"><svg class="h-[5px] w-2"><use href="#caret"/></svg></button>
                            <button aria-label="Borders"><svg class="size-[34px]"><use href="#borders"/></svg></button>
                            <button aria-label="Border style" class="flex w-[17px] justify-center"><svg class="h-[5px] w-2"><use href="#caret"/></svg></button>
                            <div class="mx-[7px] h-[34px] w-px bg-[#d0d0d0]"></div>
                            <button aria-label="Character scaling"><svg class="size-[34px]" viewBox="0 0 34 34"><path d="M7 26L16 14h2l9 12M11 22h12" fill="none" stroke="#555" stroke-width="2.500"/><path d="M5 11h8M21 11h8M8.500 7.500L5 11l3.500 3.500M25.500 7.500L29 11l-3.500 3.500" fill="none" stroke="#3e76b5" stroke-width="1.900"/></svg></button>
                            <svg class="ml-1 h-[5px] w-2"><use href="#caret"/></svg>
                            <div class="mr-[8px] ml-[12px] h-[34px] w-px bg-[#d0d0d0]"></div>
                            <button aria-label="Sort"><svg class="size-[34px]" viewBox="0 0 34 34"><g font-size="14" font-weight="700"><text x="5" y="15" fill="#3e76b5">A</text><text x="5" y="28" fill="#8f52b5">Z</text></g><path d="M23 5v21M19 22l4 4.500 4-4.500" fill="none" stroke="#666" stroke-width="1.700"/></svg></button>
                            <div class="mx-[5px] h-[34px] w-px bg-[#d0d0d0]"></div>
                            <button aria-label="Show marks"><svg class="size-[34px]" viewBox="0 0 34 34"><path d="M15 8a5 5 0 0 0 0 10z" fill="#777" stroke="#777" stroke-width="1"/><path d="M13 8h12M17 8v18M22 8v18" fill="none" stroke="#777" stroke-width="1.700"/></svg></button>
                        </div>
                    </div>
                    <div class="flex h-6 items-center text-[#666]"><span class="flex-1 pr-[6px] text-center">Paragraph</span><button aria-label="Paragraph settings" class="mr-[6px]"><svg class="h-3 w-3"><use href="#launcher"/></svg></button></div>
                </div>
                <div class="my-[7px] w-px shrink-0 bg-[#d0d0d0]"></div>

                <div class="flex w-[79px] shrink-0 flex-col">
                    <button class="flex flex-1 flex-col items-center pt-[11px]">
                        <svg class="h-12 w-11 shrink-0" viewBox="0 0 44 48"><path d="M1 33L13 1h8l9 25-5 3-2-5H12l-3 9zM14 18h7l-3.500-10z" fill="#4a84c4"/><path d="M43 12v11l-6 6-5-5z" fill="#777"/><path d="M31 25l5 5-3 3-5-5z" fill="#777"/><path d="M8 44q7-2 9-8 4-7 12-4 4 6-2 10-8 5-19 2z" fill="#4a84c4"/><path d="M20 37q4-5 8-3 2 3-3 4z" fill="#fff"/></svg>
                        <span class="mt-1">Styles</span><svg class="mt-2 h-[5px] w-2"><use href="#caret"/></svg>
                    </button>
                    <div class="flex h-6 items-center text-[#666]"><span class="flex-1 pl-1 text-center">Styles</span><button aria-label="Styles settings" class="mr-[6px] ml-2"><svg class="h-3 w-3"><use href="#launcher"/></svg></button></div>
                </div>
                <div class="my-[7px] w-px shrink-0 bg-[#d0d0d0]"></div>

                <button class="flex w-[65px] shrink-0 flex-col items-center pt-[7px]">
                    <span class="flex size-[46px] items-center justify-center border border-[#c6c6c6] bg-white"><svg class="size-5" viewBox="0 0 20 20" fill="none" stroke="#4a84c4"><circle cx="12.500" cy="7.500" r="6" stroke-width="2"/><path d="M8 12l-7 6" stroke-width="3.500"/></svg></span>
                    <span class="mt-[7px]">Editing</span><svg class="mt-[10px] h-[5px] w-2"><use href="#caret"/></svg>
                </button>
                <div class="my-[7px] w-px shrink-0 bg-[#d0d0d0]"></div>
            </div>

            <!-- Rulers and page -->
            <div class="flex h-[59px] shrink-0 items-start">
                <button aria-label="Tab stop" class="flex h-[33px] w-[34px] shrink-0 items-center justify-center bg-[#d8d8d8]"><span class="flex h-[22px] w-6 items-center justify-center bg-white"><svg class="size-[9px]"><path d="M1.500 0v7.500H9" fill="none" stroke="#555" stroke-width="3"/></svg></span></button>
                <svg id="hruler" class="ml-[48px] h-10 w-[1080px] shrink-0" font-size="14" fill="#444" text-anchor="middle"></svg>
            </div>
            <div class="flex min-h-0 flex-1 overflow-hidden">
                <svg id="vruler" class="ml-2 h-[860px] w-[17px] shrink-0" font-size="14" fill="#444" text-anchor="middle"></svg>
                <div class="relative mt-[2px] mr-[34px] ml-[59px] flex-1 border border-b-0 border-[#c6c6c6] bg-white pt-[76px] pr-[37px] pl-[33px]">
                    <svg class="absolute top-[44px] left-1 h-[31px] w-[31px]"><path d="M30.500 0v30.500H0" fill="none" stroke="#999"/></svg>
                    <svg class="absolute top-[44px] right-[3px] h-[31px] w-[31px]"><path d="M0.500 0v30.500H31" fill="none" stroke="#999"/></svg>
                    <svg class="absolute top-[56px] left-[14px] size-5"><use href="#move"/></svg>
                    <table class="w-full table-fixed border-collapse font-['Lato',sans-serif] text-[27px] text-[#3b7cb8]">
                        <colgroup><col><col class="w-[13px]"><col><col class="w-[13px]"><col></colgroup>
                        <tbody>
                            <tr class="h-[196px]">
                                <td class="border border-dashed border-[#777] p-0 text-center">
                                    <p class="mb-5 pt-[22px] leading-9"><span class="-ml-[2px] border-l-2 border-black">[Student ID]</span></p>
                                    <p class="leading-9 whitespace-nowrap">[First Name] [Last Name]</p>
                                </td>
                                <td class="border border-dashed border-[#777]"></td><td class="border border-dashed border-[#777]"></td><td class="border border-dashed border-[#777]"></td><td class="border border-dashed border-[#777]"></td>
                            </tr>
                            <tr class="h-[196px]"><td class="border border-dashed border-[#777]"></td><td class="border border-dashed border-[#777]"></td><td class="border border-dashed border-[#777]"></td><td class="border border-dashed border-[#777]"></td><td class="border border-dashed border-[#777]"></td></tr>
                            <tr class="h-[196px]"><td class="border border-dashed border-[#777]"></td><td class="border border-dashed border-[#777]"></td><td class="border border-dashed border-[#777]"></td><td class="border border-dashed border-[#777]"></td><td class="border border-dashed border-[#777]"></td></tr>
                            <tr class="h-[196px]"><td class="border border-dashed border-[#777]"></td><td class="border border-dashed border-[#777]"></td><td class="border border-dashed border-[#777]"></td><td class="border border-dashed border-[#777]"></td><td class="border border-dashed border-[#777]"></td></tr>
                        </tbody>
                    </table>
                </div>
            </div>

            <footer class="flex h-5 shrink-0 items-start overflow-hidden border-t border-[#c6c6c6] bg-[#f1f1f1] pl-[10px] whitespace-nowrap">
                <span class="mt-[3px] w-[117px] shrink-0">Page 1 of 2</span>
                <span class="mt-[3px] w-[92px] shrink-0">6 words</span>
                <svg class="mt-1 h-5 w-[21px] shrink-0" viewBox="0 0 21 20" fill="none" stroke="#777" stroke-width="1.500"><path d="M10 20V3Q8 1 6 1H1v16h5q3 0 4 3 1-3 4-3h2M10 3q2-2 4-2h5v3M12 9l3 3 5-7"/></svg>
                <span class="mt-[3px] ml-[27px] w-[204px] shrink-0">English (United Kingdom)</span>
                <svg class="mt-[5px] ml-6 size-5 shrink-0"><use href="#macro"/></svg>
                <button aria-label="Read mode" class="mt-[5px] ml-auto shrink-0"><svg class="h-5 w-5" viewBox="0 0 20 20" fill="none" stroke="#666" stroke-width="1.500"><path d="M10 3v17M1 1h6l3 2 3-2h6v17H1zM3 5h5M3 8.500h5M3 12h5M12 5h5M12 8.500h5M12 12h5"/></svg></button>
                <button aria-label="Print layout" class="ml-5 flex h-8 w-[58px] shrink-0 justify-center bg-[#c8c8c8] pt-[5px]"><svg class="h-5 w-[21px]" viewBox="0 0 21 20" fill="none" stroke="#666" stroke-width="1.500"><path d="M1 1h19v19H1zM4 5h13M4 8.500h13M4 12h13M4 15.500h13"/></svg></button>
                <button aria-label="Web layout" class="mt-[5px] ml-[17px] shrink-0"><svg class="h-5 w-[22px]" viewBox="0 0 22 20"><path d="M19 7V1H1v19h9M4 5h12M4 8.500h9M4 12h6" fill="none" stroke="#666" stroke-width="1.500"/><circle cx="16" cy="13" r="5.500" fill="#777"/><path d="M13 12l3 2 1-4" stroke="#f1f1f1" fill="none"/></svg></button>
                <button aria-label="Zoom out" class="mt-[14px] ml-7 h-[3px] w-[9px] shrink-0 bg-[#555]"></button>
                <input type="range" min="0" max="200" value="90" aria-label="Zoom" class="mt-[15px] ml-[6px] h-px w-[152px] shrink-0 appearance-none bg-[#999] [&::-webkit-slider-thumb]:h-[18px] [&::-webkit-slider-thumb]:w-[6px] [&::-webkit-slider-thumb]:appearance-none [&::-webkit-slider-thumb]:bg-[#666]">
                <button aria-label="Zoom in" class="mt-[9px] ml-[6px] shrink-0"><svg class="size-3"><path d="M6 0v12M0 6h12" stroke="#555" stroke-width="3"/></svg></button>
                <span class="mt-[3px] ml-6 w-5 shrink-0">90%</span>
            </footer>
        </section>
    </main>

    <!-- Callout box and arrow -->
    <div class="pointer-events-none absolute top-[335px] left-[17px] z-20 h-[50px] w-[466px] border-5 border-[#f00]"></div>
    <svg class="pointer-events-none absolute top-[355px] left-[490px] z-20 h-[85px] w-[500px]" viewBox="0 0 500 85"><path d="M7 10L478 69" stroke="#f00" stroke-width="6"/><path d="M477 61l16 10.500-18 7z" fill="#f00" stroke="#f00"/></svg>

    <script>
        const rows = [
            ["Nilsson", "Mirjam", "ST00100", "Level 1", "M"],
            ["Lindqvist", "Victoria", "ST00101", "Level 2", "M"],
            ["Davis", "Sophia", "ST00114", "Level 1", "F"],
            ["Williams", "Oliver", "ST00104", "Level 2", "M"],
            ["Nilsson", "Mason", "ST00110", "Level 1", "F"],
            ["Garcia", "James", "ST00107", "Level 1", "M"],
            ["Miller", "Benjamin", "ST00108", "Level 2", "M"],
            ["Davis", "Lucas", "ST00109", "Level 3", "M"],
            ["Lindqvist", "Olivia", "ST00111", "Level 3", "F"],
            ["Brown", "William", "ST00105", "Level 2", "M"],
            ["Jones", "Elijah", "ST00106", "Level 2", "M"],
            ["Garcia", "Emma", "ST00112", "Level 3", "F"],
            ["Miller", "Ava", "ST00113", "Level 2", "F"],
            ["Smith", "Liam", "ST00102", "Level 3", "M"],
            ["Williams", "Isabella", "ST00115", "Level 3", "F"],
            ["Johnson", "Noah", "ST00103", "Level 2", "M"],
            ["Brown", "Charlotte", "ST00116", "Level 2", "F"],
            ["Johnson", "Amelia", "ST00117", "Level 1", "F"]
        ];
        const empty = ["", "", "", "", ""];
        const all = [empty, ["Student List", "", "", "", ""], ["Last Name", "First Name", "Student ID", "Level", "M/F"], ...rows, empty];

        document.getElementById("sheet").innerHTML = all.map((row, i) => {
            const n = i + 1;
            const band = n > 3 && n < 21 && n % 2 === 0;
            let line = "border-b border-b-[#d4d4d4]";
            if (n === 2 || n === 3 || n === 21) line = "border-b-2 border-b-black";
            if (band) line = "border-b border-b-[#d9d9d9]";
            const side = band ? "border-r-[#d9d9d9]" : "border-r-[#d4d4d4]";
            const cells = row.map((text, c) => {
                let font = "text-[19px]";
                if (n === 2) font = "text-[25px]";
                if (n === 3) font = "text-[18px] font-bold text-black";
                const pad = c === 4 ? "pt-[3px]" : "pt-0";
                const corner = n === 21 && c === 4 ? `<svg class="absolute right-0 bottom-0 h-[6px] w-[6px]"><path d="M6 0v6H0V4h3V0z" fill="#3f48a5"/></svg>` : "";
                return `<td class="relative border-r ${line} ${side} p-0 align-top"><div class="h-[33px] pl-[3px] leading-[34px] whitespace-nowrap ${font} ${pad}">${text}</div>${corner}</td>`;
            }).join("");
            return `<tr class="h-[35px] ${band ? "bg-[#d9d9d9]" : "bg-white"}"><th class="border-r border-b border-r-[#9f9f9f] border-b-[#c0c0c0] bg-[#e6e6e6] p-0 text-center align-top text-[18px] font-normal"><div class="h-[33px] pt-[3px] pr-[3px] leading-[34px]">${n}</div></th>${cells}<td class="border-b border-[#d4d4d4] bg-white"></td></tr>`;
        }).join("");

        // One label per centimetre, a tick half way and a dot on each quarter
        const cm = 51.45;

        function hash(x) {
            return `<path d="M${x - 4} 8v15M${x} 8v15M${x + 4} 8v15M${x - 6} 12h12M${x - 6} 16h12M${x - 6} 20h12" stroke="#777" stroke-width="1.5" fill="none"/>`;
        }

        function drawHorizontal() {
            let out = `<rect y="8" width="1080" height="16" fill="#fff"/><rect y="8" width="36" height="16" fill="#c5c5c5"/><rect x="1036" y="8" width="44" height="16" fill="#c5c5c5"/>`;
            for (let i = 0; i <= 20; i++) {
                const x = Math.round(36 + i * cm);
                if (i !== 0 && i !== 13) out += `<text x="${x}" y="22">${i}</text>`;
                if (i < 20) out += `<rect x="${x + 25}" y="14" width="1" height="7"/><rect x="${x + 12}" y="16" width="2" height="2"/><rect x="${x + 38}" y="16" width="2" height="2"/>`;
            }
            out += `<rect x="11" y="14" width="1" height="7"/><rect x="24" y="16" width="2" height="2"/><rect x="1077" y="16" width="2" height="2"/>`;
            out += hash(32) + hash(360) + hash(374) + hash(701) + hash(713) + hash(1038);
            out += `<path d="M31 5h12v4l-6 7 6 6v14H31V22l6-6-6-7zM31 27h12" fill="#fff" stroke="#888"/><path d="M353 27v-5l6-7 6 7v5z" fill="#fff" stroke="#888"/>`;
            document.getElementById("hruler").innerHTML = out;
        }

        function drawVertical() {
            let out = `<rect width="17" height="860" fill="#fff"/><rect width="17" height="80" fill="#c5c5c5"/>`;
            for (let i = -1; i <= 15; i++) {
                const y = Math.round(79 + i * cm);
                if (i !== 0 && i !== 4) out += `<text transform="translate(16 ${y}) rotate(-90)">${Math.abs(i)}</text>`;
                out += `<rect x="8" y="${y + 25}" width="7" height="1"/><rect x="10" y="${y + 12}" width="2" height="2"/><rect x="10" y="${y + 38}" width="2" height="2"/>`;
            }
            [273, 468, 665].forEach(y => {
                out += `<rect y="${y}" width="17" height="11" fill="#c5c5c5"/>`;
            });
            document.getElementById("vruler").innerHTML = out;
        }

        drawHorizontal();
        drawVertical();
    </script>
</body>
</html>
